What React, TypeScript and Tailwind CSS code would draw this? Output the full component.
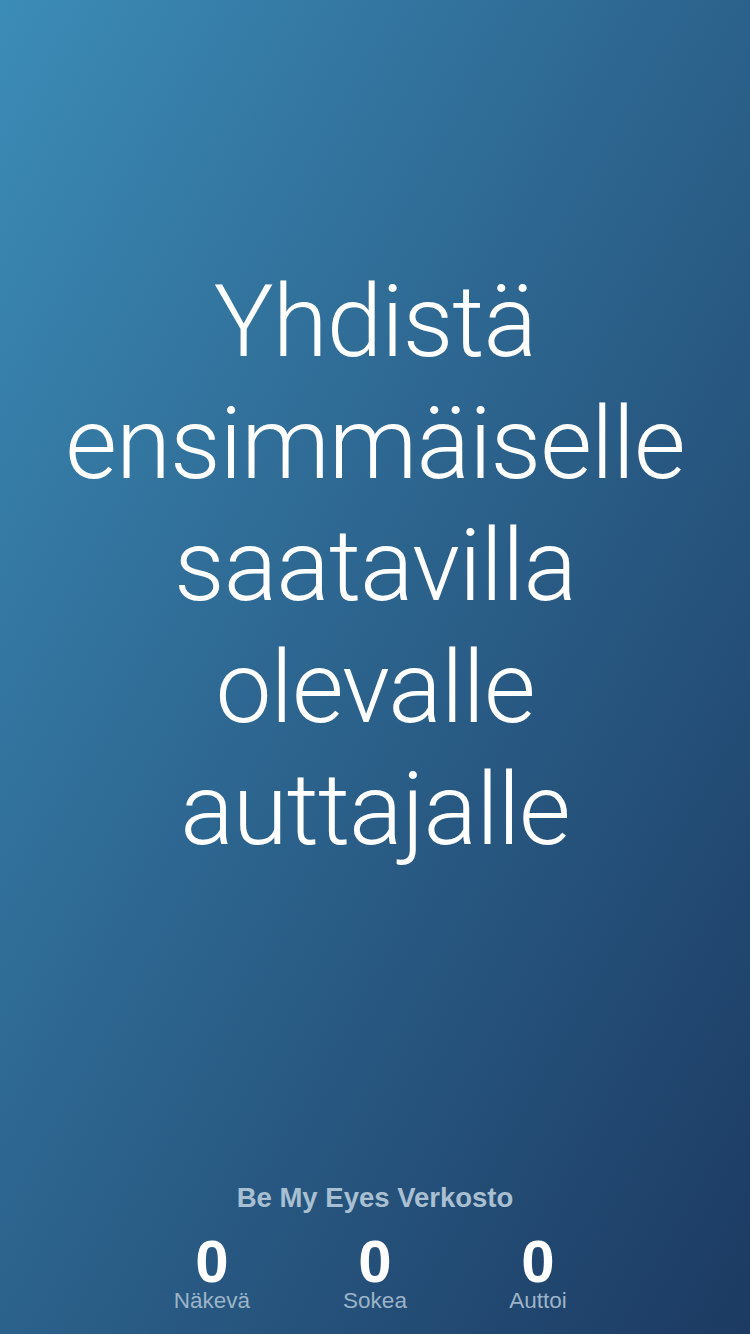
import React from 'react';

const stats = [
  { label: 'Näkevä', count: 0 },
  { label: 'Sokea', count: 0 },
  { label: 'Auttoi', count: 0 },
];

export default function App() {
  return (
    <div
      className="w-[750px] h-[1334px] flex flex-col items-center bg-gradient-to-br from-[#3b8cb7] to-[#1c3a62] text-white"
      style={{ fontFamily: '"Helvetica Neue", Roboto, "Liberation Sans", sans-serif' }}
    >
      {/* Headline */}
      <div className="flex-1 flex items-center justify-center pb-[50px]">
        <h1 className="text-center text-[100px] leading-[122px] font-light tracking-[-1px]">
          Yhdistä
          <br />
          ensimmäiselle
          <br />
          saatavilla
          <br />
          olevalle
          <br />
          auttajalle
        </h1>
      </div>

      {/* Network stats */}
      <div className="flex flex-col items-center pb-[22px]" style={{ fontFamily: '"Liberation Sans", sans-serif' }}>
        <p className="text-[27.5px] leading-[32px] font-bold text-[#a9c0d2]">Be My Eyes Verkosto</p>
        <div className="flex mt-[20px]">
          {stats.map((s) => (
            <div key={s.label} className="w-[163px] flex flex-col items-center">
              <span className="text-[60px] leading-[56px] font-bold">{s.count}</span>
              <span className="text-[22.5px] leading-[22px] text-[#9cb4c8]">{s.label}</span>
            </div>
          ))}
        </div>
      </div>
    </div>
  );
}
